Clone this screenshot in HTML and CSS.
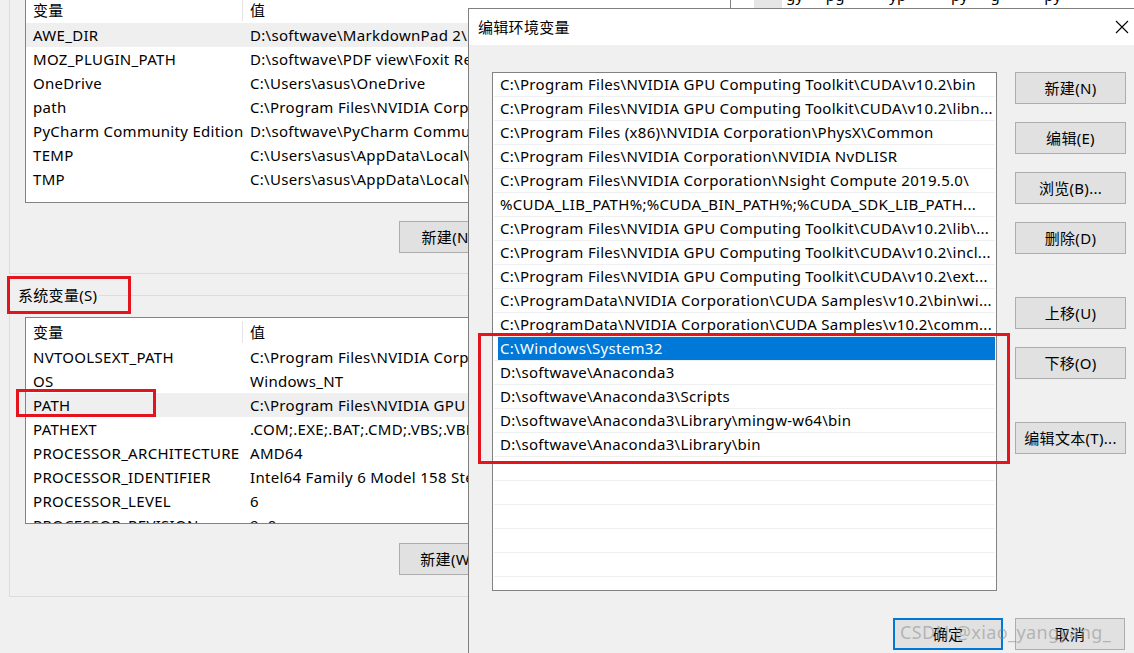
FILE: index.html
```html
<!DOCTYPE html>
<html lang="zh-CN">
<head>
    <meta charset="UTF-8">
    <title>编辑环境变量</title>
    <link rel="stylesheet" href="styles.css">
</head>
<body>
    <div class="desk">
        <div class="main">
            <div class="group user">
                <div class="list user-list">
                    <div class="row head"><span class="name">变量</span><span class="divider"></span><span class="value">值</span></div>
                    <div class="row hover"><span class="name">AWE_DIR</span><span class="value">D:\softwave\MarkdownPad 2\</span></div>
                    <div class="row"><span class="name">MOZ_PLUGIN_PATH</span><span class="value">D:\softwave\PDF view\Foxit Reader\plugins\</span></div>
                    <div class="row"><span class="name">OneDrive</span><span class="value">C:\Users\asus\OneDrive</span></div>
                    <div class="row"><span class="name">path</span><span class="value">C:\Program Files\NVIDIA Corporation\</span></div>
                    <div class="row"><span class="name">PyCharm Community Edition</span><span class="value">D:\softwave\PyCharm Community Edition\bin</span></div>
                    <div class="row"><span class="name">TEMP</span><span class="value">C:\Users\asus\AppData\Local\Temp</span></div>
                    <div class="row"><span class="name">TMP</span><span class="value">C:\Users\asus\AppData\Local\Temp</span></div>
                </div>
                <div class="btn-row">
                    <button class="btn">新建(N)...</button>
                </div>
            </div>

            <div class="group sys">
                <div class="group-head"><span class="legend">系统变量(S)</span><span class="rule"></span></div>
                <div class="list sys-list">
                    <div class="row head"><span class="name">变量</span><span class="divider"></span><span class="value">值</span></div>
                    <div class="row"><span class="name">NVTOOLSEXT_PATH</span><span class="value">C:\Program Files\NVIDIA Corporation\NvToolsExt\</span></div>
                    <div class="row"><span class="name">OS</span><span class="value">Windows_NT</span></div>
                    <div class="row hover"><span class="name">PATH</span><span class="value">C:\Program Files\NVIDIA GPU Computing Toolkit\</span></div>
                    <div class="row"><span class="name">PATHEXT</span><span class="value">.COM;.EXE;.BAT;.CMD;.VBS;.VBE;.JS</span></div>
                    <div class="row"><span class="name">PROCESSOR_ARCHITECTURE</span><span class="value">AMD64</span></div>
                    <div class="row"><span class="name">PROCESSOR_IDENTIFIER</span><span class="value">Intel64 Family 6 Model 158 Stepping 10</span></div>
                    <div class="row"><span class="name">PROCESSOR_LEVEL</span><span class="value">6</span></div>
                    <div class="row"><span class="name">PROCESSOR_REVISION</span><span class="value">9e0a</span></div>
                </div>
                <div class="btn-row">
                    <button class="btn">新建(W)...</button>
                </div>
            </div>
        </div>
        <div class="side">
            <span class="thumb"></span>
            <span class="peek">gy pg  yp  py g  py</span>
        </div>
    </div>

    <div class="dialog">
        <div class="titlebar">
            <span class="title">编辑环境变量</span>
            <svg class="close" width="14" height="14" viewBox="0 0 14 14">
                <path d="M1 1 L13 13 M13 1 L1 13" stroke="#000" stroke-width="1.1" fill="none"/>
            </svg>
        </div>
        <div class="dlg-body">
            <div class="path-list">
                <div class="item">C:\Program Files\NVIDIA GPU Computing Toolkit\CUDA\v10.2\bin</div>
                <div class="item">C:\Program Files\NVIDIA GPU Computing Toolkit\CUDA\v10.2\libn...</div>
                <div class="item">C:\Program Files (x86)\NVIDIA Corporation\PhysX\Common</div>
                <div class="item">C:\Program Files\NVIDIA Corporation\NVIDIA NvDLISR</div>
                <div class="item">C:\Program Files\NVIDIA Corporation\Nsight Compute 2019.5.0\</div>
                <div class="item">%CUDA_LIB_PATH%;%CUDA_BIN_PATH%;%CUDA_SDK_LIB_PATH...</div>
                <div class="item">C:\Program Files\NVIDIA GPU Computing Toolkit\CUDA\v10.2\lib\...</div>
                <div class="item">C:\Program Files\NVIDIA GPU Computing Toolkit\CUDA\v10.2\incl...</div>
                <div class="item">C:\Program Files\NVIDIA GPU Computing Toolkit\CUDA\v10.2\ext...</div>
                <div class="item">C:\ProgramData\NVIDIA Corporation\CUDA Samples\v10.2\bin\wi...</div>
                <div class="item">C:\ProgramData\NVIDIA Corporation\CUDA Samples\v10.2\comm...</div>
                <div class="item sel">C:\Windows\System32</div>
                <div class="item">D:\softwave\Anaconda3</div>
                <div class="item">D:\softwave\Anaconda3\Scripts</div>
                <div class="item">D:\softwave\Anaconda3\Library\mingw-w64\bin</div>
                <div class="item">D:\softwave\Anaconda3\Library\bin</div>
                <div class="item"></div>
                <div class="item"></div>
                <div class="item"></div>
                <div class="item"></div>
                <div class="item"></div>
                <div class="item"></div>
            </div>
            <div class="actions">
                <button class="btn">新建(N)</button>
                <button class="btn">编辑(E)</button>
                <button class="btn">浏览(B)...</button>
                <button class="btn">删除(D)</button>
                <button class="btn spaced">上移(U)</button>
                <button class="btn">下移(O)</button>
                <button class="btn spaced">编辑文本(T)...</button>
            </div>
        </div>
        <div class="dlg-foot">
            <button class="btn default">确定</button>
            <button class="btn">取消</button>
        </div>
    </div>

    <div class="mark mark-sys"></div>
    <div class="mark mark-path"></div>
    <div class="mark mark-list"></div>

    <div class="watermark">CSDN @xiao_yangyang_</div>
</body>
</html>
```

FILE: styles.css
```css
* {
    box-sizing: border-box;
}

body {
    margin: 0;
    width: 1134px;
    height: 653px;
    overflow: hidden;
    position: relative;
    background: #f0f0f0;
    font-family: "Noto Sans", "Noto Sans CJK SC", sans-serif;
    font-size: 15px;
    letter-spacing: 0.3px;
    color: #000;
}

/* background window */

.desk {
    display: flex;
    align-items: flex-start;
}

.main {
    width: 731px;
    flex-shrink: 0;
}

.group {
    margin-left: 9px;
    border-left: 1px solid #dcdcdc;
    border-bottom: 1px solid #dcdcdc;
}

.user {
    padding-bottom: 20px;
}

.sys {
    margin-top: 11px;
    padding-bottom: 21px;
}

.group-head {
    display: flex;
    align-items: center;
    height: 21px;
    margin-left: -1px;
}

.legend {
    padding: 0 2px 0 9px;
    line-height: 21px;
    white-space: nowrap;
}

.rule {
    flex: 1;
    border-top: 1px solid #dcdcdc;
}

.list {
    margin-left: 15px;
    background: #fff;
    border: 1px solid #828282;
    overflow: hidden;
}

.user-list {
    margin-top: -5px;
    height: 208px;
}

.sys-list {
    margin-top: 11px;
    height: 207px;
}

.row {
    display: flex;
    align-items: center;
    height: 24px;
    padding-left: 7px;
    white-space: nowrap;
}

.row.head {
    height: 27px;
}

.row.hover {
    background: #efefef;
}

.name {
    width: 217px;
    flex-shrink: 0;
}

.divider {
    width: 1px;
    height: 22px;
    margin-left: -8px;
    margin-right: 7px;
    background: #e5e5e5;
}

.btn-row {
    display: flex;
    padding-left: 389px;
}

.user .btn-row {
    margin-top: 18px;
}

.sys .btn-row {
    margin-top: 19px;
}

.btn {
    width: 110px;
    height: 32px;
    padding: 0 0 2px;
    background: #e1e1e1;
    border: 1px solid #adadad;
    font-family: inherit;
    font-size: 15px;
    letter-spacing: inherit;
    color: #000;
    white-space: nowrap;
}

.side {
    flex: 1;
    height: 30px;
    display: flex;
    background: #fff;
    overflow: hidden;
}

.thumb {
    width: 28px;
    height: 30px;
    margin-left: 23px;
    background: #e6e6e6;
}

.peek {
    margin: -15px 0 0 4px;
    font-size: 15px;
    line-height: 20px;
    word-spacing: 18px;
    white-space: pre;
}

/* edit dialog */

.dialog {
    position: absolute;
    left: 468px;
    top: 8px;
    width: 680px;
    height: 660px;
    background: #f0f0f0;
    border: 1px solid #7f7f7f;
}

.titlebar {
    display: flex;
    align-items: center;
    height: 36px;
    padding-left: 9px;
    background: #fff;
}

.title {
    flex: 1;
    margin-top: -2px;
}

.close {
    margin-right: 18px;
}

.dlg-body {
    display: flex;
    gap: 18px;
    padding: 27px 0 0 23px;
}

.path-list {
    width: 505px;
    height: 519px;
    padding: 0 1px;
    background: #fff;
    border: 1px solid #828282;
    overflow: hidden;
}

.item {
    height: 24px;
    padding-left: 6px;
    line-height: 23px;
    border-bottom: 1px solid #eef0f2;
    white-space: nowrap;
    overflow: hidden;
}

.item.sel {
    background: linear-gradient(90deg, transparent 4px, #0078d7 4px);
    color: #fff;
}

.actions {
    display: flex;
    flex-direction: column;
    gap: 18px;
}

.actions .btn {
    width: 111px;
}

.actions .spaced {
    margin-top: 25px;
}

.dlg-foot {
    display: flex;
    gap: 12px;
    margin-top: 27px;
    padding-left: 424px;
}

.btn.default {
    border: 2px solid #0078d7;
}

/* annotations */

.mark {
    position: absolute;
    border: 3px solid #e3141b;
}

.mark-sys {
    left: 7px;
    top: 276px;
    width: 124px;
    height: 38px;
}

.mark-path {
    left: 16px;
    top: 389px;
    width: 140px;
    height: 28px;
}

.mark-list {
    left: 478px;
    top: 333px;
    width: 532px;
    height: 131px;
}

.watermark {
    position: absolute;
    left: 900px;
    top: 620px;
    font-size: 18px;
    letter-spacing: 0.4px;
    color: rgba(140, 140, 140, 0.55);
    white-space: nowrap;
}
```
